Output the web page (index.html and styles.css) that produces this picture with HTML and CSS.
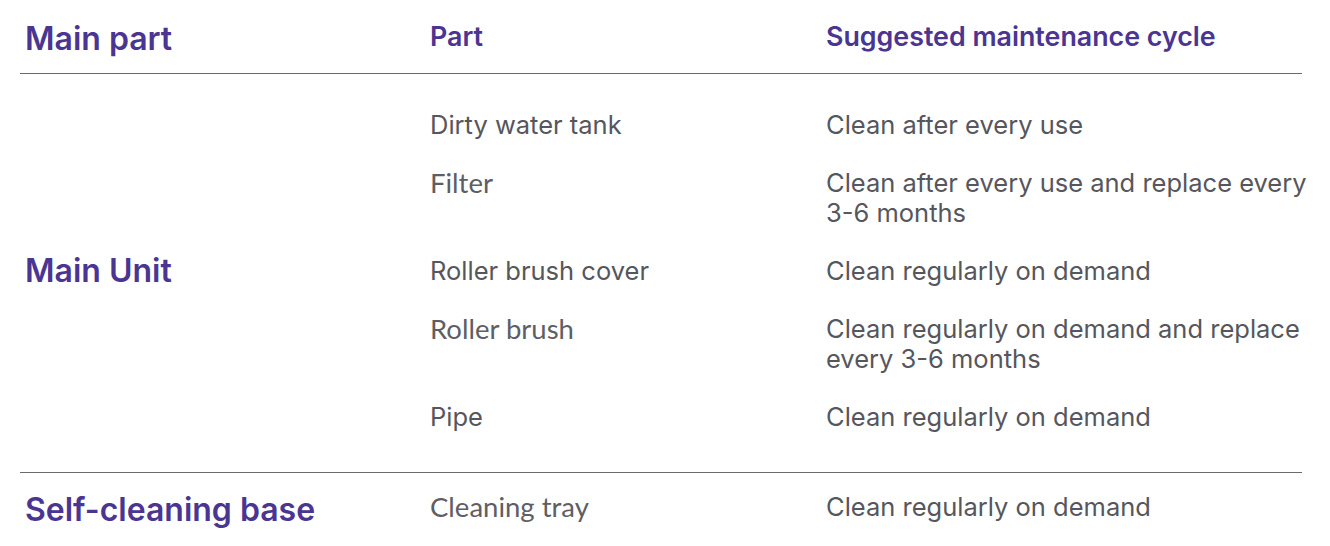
FILE: index.html
```html
<!DOCTYPE html>
<html lang="en">
<head>
<meta charset="utf-8">
<title>Maintenance</title>
<link rel="stylesheet" href="styles.css">
</head>
<body>
<div class="table">
  <div class="head">
    <div class="h-main">Main part</div>
    <div class="h-col">Part</div>
    <div class="h-col">Suggested maintenance cycle</div>
  </div>
  <div class="section sec-main">
    <div class="group">Main Unit</div>
    <div class="rows">
      <div class="row"><div class="part">Dirty water tank</div><div class="cycle">Clean after every use</div></div>
      <div class="row"><div class="part light">Filter</div><div class="cycle">Clean after every use and replace every<br>3-6 months</div></div>
      <div class="row"><div class="part">Roller brush cover</div><div class="cycle">Clean regularly on demand</div></div>
      <div class="row"><div class="part light">Roller brush</div><div class="cycle">Clean regularly on demand and replace<br>every 3-6 months</div></div>
      <div class="row"><div class="part">Pipe</div><div class="cycle">Clean regularly on demand</div></div>
    </div>
  </div>
  <div class="section sec-base">
    <div class="group">Self-cleaning base</div>
    <div class="rows">
      <div class="row"><div class="part light">Cleaning tray</div><div class="cycle">Clean regularly on demand</div></div>
    </div>
  </div>
</div>
</body>
</html>
```
FILE: styles.css
```css
html, body {
  margin: 0;
  padding: 0;
  background: #ffffff;
}
body {
  font-family: Inter, "Noto Sans", sans-serif;
  width: 1330px;
  height: 546px;
  overflow: hidden;
}
.table {
  margin-left: 20px;
  width: 1282px;
}
.head, .section {
  display: grid;
  grid-template-columns: 405px 396px 1fr;
  padding-left: 5px;
}
.head {
  height: 74px;
  border-bottom: 1.5px solid #6b6b6b;
  box-sizing: border-box;
  align-items: start;
}
.h-main {
  color: #4b3592;
  font-size: 32px;
  font-weight: 600;
  line-height: 36px;
  padding-top: 21px;
}
.h-col {
  color: #4b3592;
  font-size: 26.8px;
  font-weight: 600;
  line-height: 30px;
  padding-top: 21px;
}
.section {
  grid-template-columns: 405px 1fr;
  align-items: center;
}
.sec-main {
  padding-top: 36px;
  padding-bottom: 40px;
  border-bottom: 1.5px solid #6b6b6b;
}
.sec-base {
  padding-top: 13px;
}
.group {
  color: #4b3592;
  font-size: 32px;
  font-weight: 600;
  line-height: 36px;
}
.sec-base .group {
  padding-top: 6px;
}
.rows {
  display: flex;
  flex-direction: column;
  gap: 28px;
}
.row {
  display: grid;
  grid-template-columns: 396px 1fr;
}
.part, .cycle {
  color: #56565c;
  font-size: 25.5px;
  line-height: 30px;
  font-weight: 400;
  white-space: nowrap;
}
.part.light {
  font-family: Lato, "Open Sans", sans-serif;
  font-size: 27.5px;
  color: #5e5e64;
}
```
